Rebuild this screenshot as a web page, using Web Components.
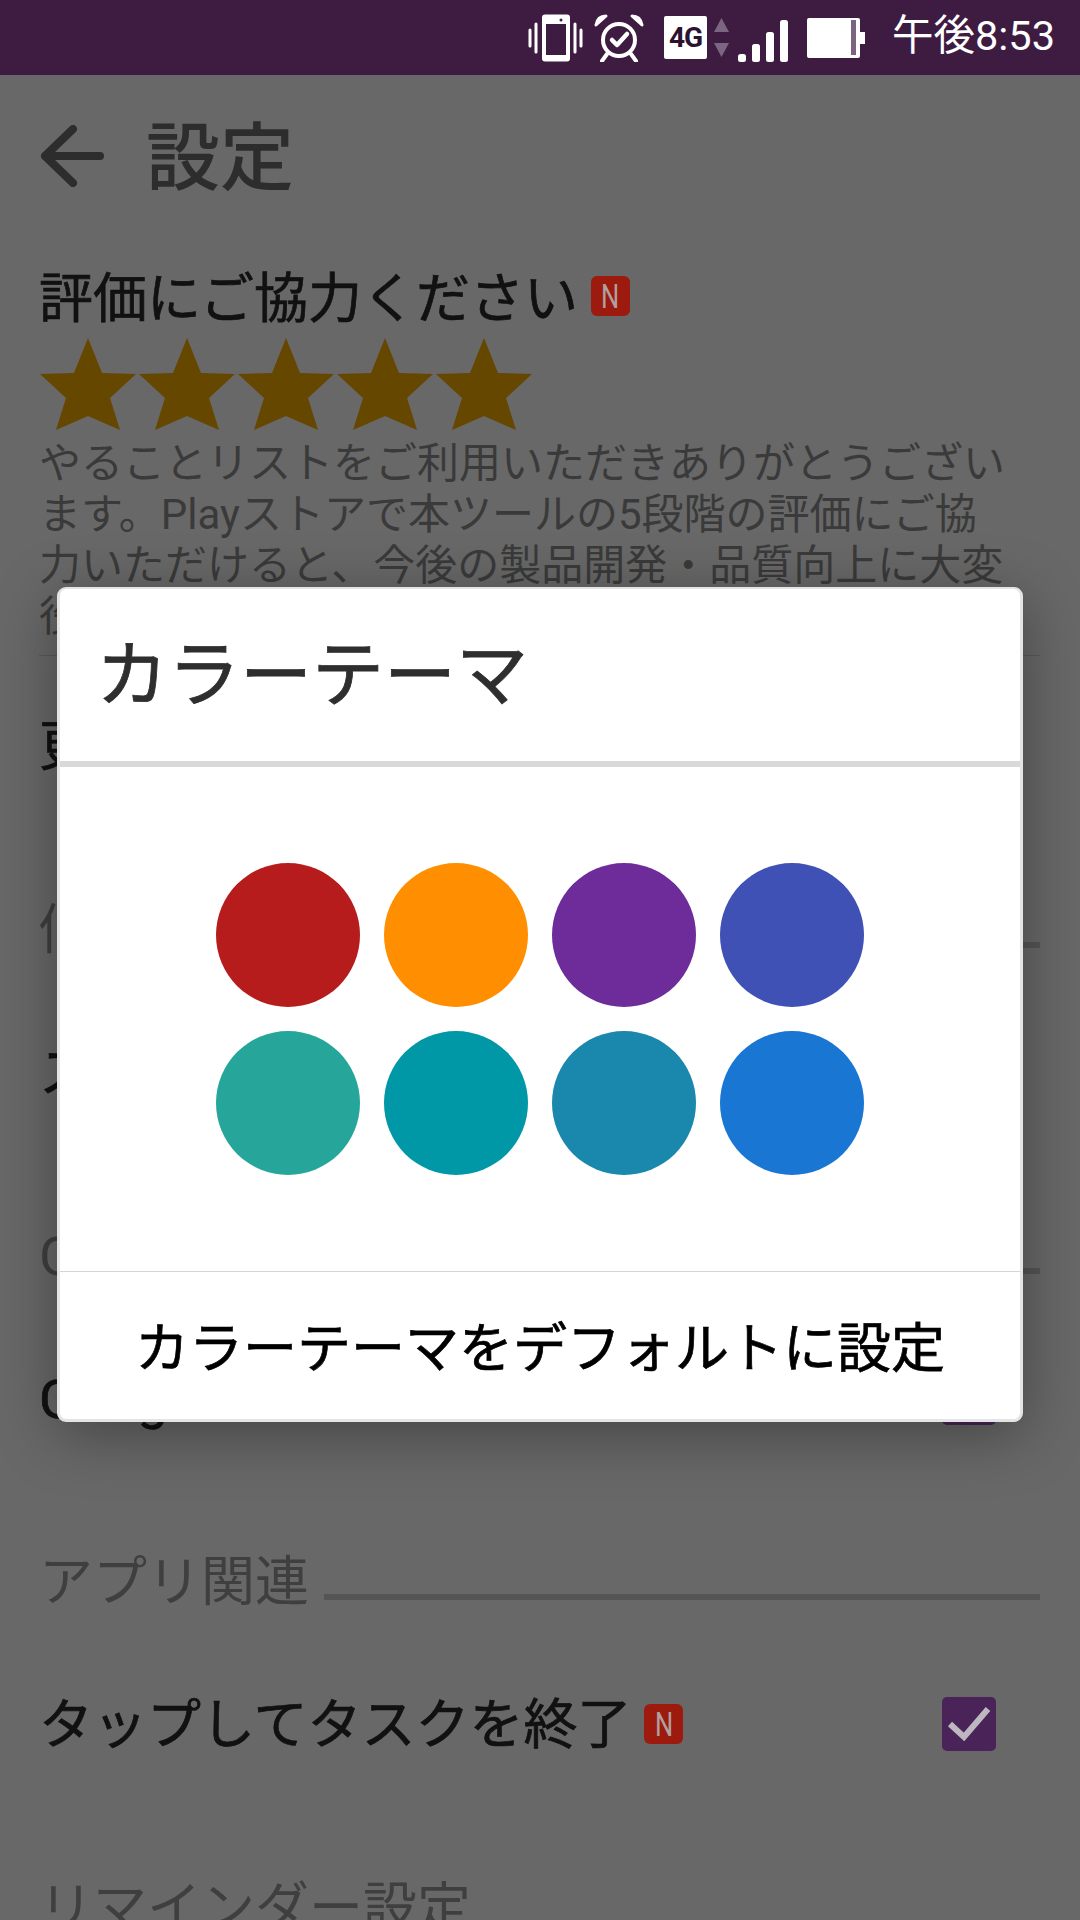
<!DOCTYPE html>
<html lang="ja">
<head>
<meta charset="utf-8">
<title>設定</title>
<style>
    html, body {
        margin: 0;
        padding: 0;
    }
    body {
        width: 1080px;
        height: 1920px;
        overflow: hidden;
        position: relative;
        background: #686868;
        font-family: Roboto, "Noto Sans CJK JP", sans-serif;
    }
</style>
</head>
<body>
<status-bar time="午後8:53"></status-bar>

<app-header>設定</app-header>

<rating-block heading="評価にご協力ください">
    やることリストをご利用いただきありがとうございます。Playストアで本ツールの5段階の評価にご協力いただけると、今後の製品開発・品質向上に大変役立ちます。
</rating-block>

<settings-row first>更新情報</settings-row>
<settings-section>個人設定</settings-section>
<settings-row>スタートページ</settings-row>
<settings-section>Google</settings-section>
<settings-row checkbox>Google</settings-row>
<settings-section>アプリ関連</settings-section>
<settings-row checkbox badge>タップしてタスクを終了</settings-row>
<settings-section>リマインダー設定</settings-section>

<color-dialog heading="カラーテーマ">
    <color-swatch color="#b71c1c"></color-swatch>
    <color-swatch color="#ff8f00"></color-swatch>
    <color-swatch color="#6d2c99"></color-swatch>
    <color-swatch color="#3f51b5"></color-swatch>
    <color-swatch color="#26a69a"></color-swatch>
    <color-swatch color="#0097a7"></color-swatch>
    <color-swatch color="#1a87ad"></color-swatch>
    <color-swatch color="#1976d2"></color-swatch>
    <span slot="footer">カラーテーマをデフォルトに設定</span>
</color-dialog>

<script>
class StatusBar extends HTMLElement {
    constructor() {
        super();
        this.attachShadow({ mode: 'open' });
        this.shadowRoot.innerHTML = `
            <style>
                :host {
                    display: flex;
                    align-items: center;
                    justify-content: flex-end;
                    height: 75px;
                    padding-right: 25px;
                    background: #3e1c41;
                    color: #fff;
                }
                svg {
                    display: block;
                    flex: none;
                }
                .vibrate { margin-right: 11px; }
                .alarm { margin-right: 20px; }
                .net {
                    width: 43px;
                    height: 43px;
                    margin-right: 7px;
                    border-radius: 2px;
                    background: #fff;
                    color: #2a1230;
                    font: 700 28px/43px Roboto, sans-serif;
                    text-align: center;
                    letter-spacing: -1px;
                }
                .arrows { margin-right: 9px; }
                .signal { margin: 7px 19px 0 0; }
                .battery { margin-right: 27px; }
                .time {
                    padding-bottom: 3px;
                    font: 400 41.500px/1 Roboto, "Noto Sans CJK JP", sans-serif;
                    white-space: nowrap;
                }
            </style>
            <svg class="vibrate" width="55" height="48" viewBox="0 0 55 48">
                <path d="M2 16v16M8 10v28M47 10v28M53 16v16" stroke="#fff" stroke-width="3" stroke-linecap="round" fill="none"/>
                <rect x="14" y="0.5" width="28" height="47" rx="3" fill="#fff"/>
                <rect x="18" y="10" width="20" height="31" fill="#3e1c41"/>
                <circle cx="33" cy="6" r="1.5" fill="#3e1c41"/>
            </svg>
            <svg class="alarm" width="50" height="48" viewBox="0 0 50 48">
                <circle cx="25" cy="26" r="16" fill="none" stroke="#fff" stroke-width="4"/>
                <path d="M2 11 C3 5 7 2 12 2 Z M48 11 C47 5 43 2 38 2 Z" fill="#fff" stroke="#fff" stroke-width="3" stroke-linejoin="round"/>
                <path d="M13 40l-5 7M37 40l5 7" stroke="#fff" stroke-width="4" stroke-linecap="round"/>
                <path d="M18 26l5 5 10-11" fill="none" stroke="#fff" stroke-width="4.500" stroke-linecap="round" stroke-linejoin="round"/>
            </svg>
            <div class="net">4G</div>
            <svg class="arrows" width="15" height="39" viewBox="0 0 15 39">
                <path d="M7.500 0L15 14H0Z M0 25H15L7.500 39Z" fill="#7b6580"/>
            </svg>
            <svg class="signal" width="50" height="42" viewBox="0 0 50 42">
                <rect x="0" y="34" width="8" height="8" rx="2.500" fill="#fff"/>
                <rect x="14" y="24" width="8" height="18" rx="2.500" fill="#fff"/>
                <rect x="28" y="12" width="8" height="30" rx="2.500" fill="#fff"/>
                <rect x="42" y="0" width="8" height="42" rx="2.500" fill="#fff"/>
            </svg>
            <svg class="battery" width="58" height="40" viewBox="0 0 58 40">
                <rect x="0" y="0" width="53" height="40" rx="2" fill="#fff"/>
                <rect x="44" y="2" width="5" height="35" fill="#7b6580"/>
                <rect x="53" y="14" width="5" height="12" fill="#fff"/>
            </svg>
            <span class="time"></span>
        `;
    }

    connectedCallback() {
        this.shadowRoot.querySelector('.time').textContent = this.getAttribute('time');
    }
}

class AppHeader extends HTMLElement {
    constructor() {
        super();
        this.attachShadow({ mode: 'open' });
        this.shadowRoot.innerHTML = `
            <style>
                :host {
                    display: flex;
                    align-items: center;
                    height: 162px;
                    padding-left: 40px;
                    color: #2d2d2d;
                    font: 500 74px/1 "Noto Sans CJK JP", sans-serif;
                }
                svg {
                    display: block;
                    margin-right: 42px;
                }
                span {
                    padding-bottom: 8px;
                }
            </style>
            <svg width="64" height="62" viewBox="0 0 64 62">
                <path d="M33 4L5 31l28 27M5 31h55" fill="none" stroke="#2d2d2d" stroke-width="8" stroke-linecap="round" stroke-linejoin="round"/>
            </svg>
            <span><slot></slot></span>
        `;
    }
}

class NewBadge extends HTMLElement {
    constructor() {
        super();
        this.attachShadow({ mode: 'open' });
        this.shadowRoot.innerHTML = `
            <style>
                :host {
                    display: block;
                    flex: none;
                    width: 39px;
                    height: 40px;
                    margin-left: 13px;
                    border-radius: 6px;
                    background: #9c1b0e;
                    color: #b0a0a0;
                    font: 400 34px/40px Roboto, sans-serif;
                    -webkit-text-stroke: 0;
                    text-align: center;
                }
                span {
                    display: inline-block;
                    transform: scaleX(0.75);
                }
            </style>
            <span>N</span>
        `;
    }
}

class RatingBlock extends HTMLElement {
    constructor() {
        super();
        this.attachShadow({ mode: 'open' });
        const star = `
            <svg width="99" height="92" viewBox="0 0 99 92">
                <path d="M48 0L62 35L96 36L70 60L80 92L48 78L16 92L26 60L0 36L34 35Z" fill="#664700"/>
            </svg>`;
        this.shadowRoot.innerHTML = `
            <style>
                :host {
                    display: block;
                    margin: 0 40px 0 39px;
                    padding-top: 29px;
                    padding-bottom: 13px;
                    border-bottom: 1px solid #5a5a5a;
                }
                .heading {
                    display: flex;
                    align-items: center;
                    height: 60px;
                    color: #111;
                    font: 400 54px/60px "Noto Sans CJK JP", sans-serif;
                }
                #h {
                    padding-bottom: 3px;
                    -webkit-text-stroke: 0.7px #111;
                }
                .stars {
                    display: flex;
                    height: 92px;
                    margin-top: 12px;
                    margin-bottom: 8px;
                    margin-left: 1px;
                }
                .stars svg {
                    display: block;
                    flex: none;
                }
                .text {
                    padding-right: 28px;
                    color: #3a3a3a;
                    font: 400 42px/51px Roboto, "Noto Sans CJK JP", sans-serif;
                }
            </style>
            <div class="heading"><span id="h"></span><new-badge></new-badge></div>
            <div class="stars">${star.repeat(5)}</div>
            <div class="text"><slot></slot></div>
        `;
    }

    connectedCallback() {
        this.shadowRoot.getElementById('h').textContent = this.getAttribute('heading');
    }
}

class SettingsSection extends HTMLElement {
    constructor() {
        super();
        this.attachShadow({ mode: 'open' });
        this.shadowRoot.innerHTML = `
            <style>
                :host {
                    display: flex;
                    align-items: flex-start;
                    height: 60px;
                    margin: 91px 40px 55px 39px;
                    color: #3f3f3f;
                    font: 400 54px/68px Roboto, "Noto Sans CJK JP", sans-serif;
                    white-space: nowrap;
                }
                .rule {
                    flex: 1;
                    align-self: flex-end;
                    height: 6px;
                    margin: 0 0 9px 15px;
                    background: #555;
                }
            </style>
            <slot></slot>
            <div class="rule"></div>
        `;
    }
}

class SettingsRow extends HTMLElement {
    constructor() {
        super();
        this.attachShadow({ mode: 'open' });
        this.shadowRoot.innerHTML = `
            <style>
                :host {
                    display: flex;
                    align-items: center;
                    height: 120px;
                    margin: 0 84px 0 39px;
                    color: #111;
                    font: 400 54px/60px Roboto, "Noto Sans CJK JP", sans-serif;
                    white-space: nowrap;
                }
                :host([first]) {
                    margin-top: 30px;
                }
                .label {
                    padding-top: 4px;
                    -webkit-text-stroke: 0.7px #111;
                }
                .box {
                    display: none;
                    margin-left: auto;
                }
                :host([checkbox]) .box {
                    display: block;
                }
                new-badge {
                    display: none;
                }
                :host([badge]) new-badge {
                    display: block;
                }
            </style>
            <span class="label"><slot></slot></span>
            <new-badge></new-badge>
            <svg class="box" width="54" height="54" viewBox="0 0 54 54">
                <rect width="54" height="54" rx="5" fill="#4a2459"/>
                <path d="M8 27l14 13L46 12" fill="none" stroke="#bdb8c0" stroke-width="6"/>
            </svg>
        `;
    }
}

class ColorSwatch extends HTMLElement {
    constructor() {
        super();
        this.attachShadow({ mode: 'open' });
        this.shadowRoot.innerHTML = `
            <style>
                :host {
                    display: block;
                    width: 144px;
                    height: 144px;
                    border-radius: 50%;
                    background: var(--swatch);
                }
            </style>
        `;
    }

    connectedCallback() {
        this.style.setProperty('--swatch', this.getAttribute('color'));
    }
}

class ColorDialog extends HTMLElement {
    constructor() {
        super();
        this.attachShadow({ mode: 'open' });
        this.shadowRoot.innerHTML = `
            <style>
                :host {
                    position: absolute;
                    left: 57px;
                    top: 587px;
                    display: flex;
                    flex-direction: column;
                    width: 966px;
                    height: 835px;
                    box-sizing: border-box;
                    border: solid #e4e4e4;
                    border-width: 2px 3px 3px 3px;
                    border-radius: 9px;
                    background: #fff;
                    box-shadow: 0 12px 60px rgba(0, 0, 0, 0.35);
                }
                .title {
                    flex: none;
                    padding: 0 0 0 36px;
                    border-bottom: 6px solid #d9d9d9;
                    box-sizing: border-box;
                    height: 178px;
                    color: #2e2e2e;
                    font: 400 72px/160px "Noto Sans CJK JP", sans-serif;
                    -webkit-text-stroke: 0.8px #2e2e2e;
                }
                .body {
                    flex: 1;
                    display: grid;
                    grid-template-columns: repeat(4, 144px);
                    gap: 24px;
                    justify-content: center;
                    align-content: center;
                }
                .footer {
                    flex: none;
                    height: 147px;
                    border-top: 1px solid #d4d4d4;
                    color: #000;
                    font: 400 54px/146px "Noto Sans CJK JP", sans-serif;
                    -webkit-text-stroke: 0.7px #000;
                    text-align: center;
                    white-space: nowrap;
                }
            </style>
            <div class="title"></div>
            <div class="body"><slot></slot></div>
            <div class="footer"><slot name="footer"></slot></div>
        `;
    }

    connectedCallback() {
        this.shadowRoot.querySelector('.title').textContent = this.getAttribute('heading');
    }
}

customElements.define('status-bar', StatusBar);
customElements.define('app-header', AppHeader);
customElements.define('new-badge', NewBadge);
customElements.define('rating-block', RatingBlock);
customElements.define('settings-section', SettingsSection);
customElements.define('settings-row', SettingsRow);
customElements.define('color-swatch', ColorSwatch);
customElements.define('color-dialog', ColorDialog);
</script>
</body>
</html>
